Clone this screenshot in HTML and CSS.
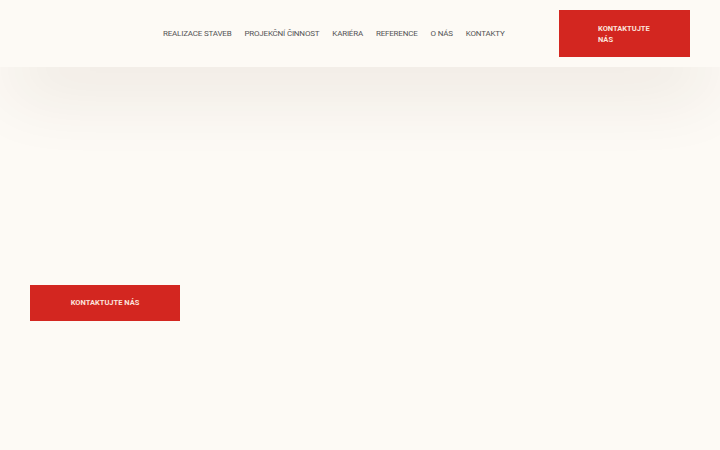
FILE: index.html
```html
<!DOCTYPE html>
<html lang="cs">
<head>
  <meta charset="UTF-8">
  <meta name="viewport" content="width=device-width, initial-scale=1.0">
  <title>Stavby</title>
  <link rel="stylesheet" href="styles.css">
</head>
<body>

  <!-- HEADER -->
  <header class="site-header">
    <nav class="main-nav">
      <a href="#">Realizace staveb</a>
      <a href="#">Projekční činnost</a>
      <a href="#">Kariéra</a>
      <a href="#">Reference</a>
      <a href="#">O nás</a>
      <a href="#">Kontakty</a>
    </nav>
    <a href="#" class="btn btn-header">Kontaktujte<br>nás</a>
  </header>

  <!-- HERO -->
  <section class="hero">
    <a href="#" class="btn btn-hero">Kontaktujte nás</a>
  </section>

</body>
</html>
```

FILE: styles.css
```css
/* ===== GENERAL ===== */
body {
  margin: 0;
  padding: 0;
  background: #fdfaf5;
  color: #444;
  font-family: Roboto, "DejaVu Sans", sans-serif;
}

/* ===== HEADER ===== */
.site-header {
  position: relative;
  z-index: 2;
  height: 67px;
  display: flex;
  align-items: center;
  padding: 0 30px 0 163px;
  background: #fdfaf5;
  box-shadow: 0 35px 70px -12px rgba(60, 40, 10, 0.11);
}
.main-nav {
  display: flex;
  gap: 13px;
  flex: 1;
}
.main-nav a {
  font-size: 8px;
  letter-spacing: -0.2px;
  text-transform: uppercase;
  text-decoration: none;
  color: #555;
}

/* ===== BUTTONS ===== */
.btn {
  display: block;
  flex-shrink: 0;
  background: #d32620;
  color: #fbe3dc;
  font-weight: bold;
  text-transform: uppercase;
  text-decoration: none;
  font-size: 7.5px;
}
.btn-header {
  width: 131px;
  height: 47px;
  box-sizing: border-box;
  padding: 13px 0 0 39px;
  line-height: 11px;
}
.btn-hero {
  width: 150px;
  height: 36px;
  line-height: 36px;
  text-align: center;
}

/* ===== HERO ===== */
.hero {
  padding: 218px 30px 0;
}
```
